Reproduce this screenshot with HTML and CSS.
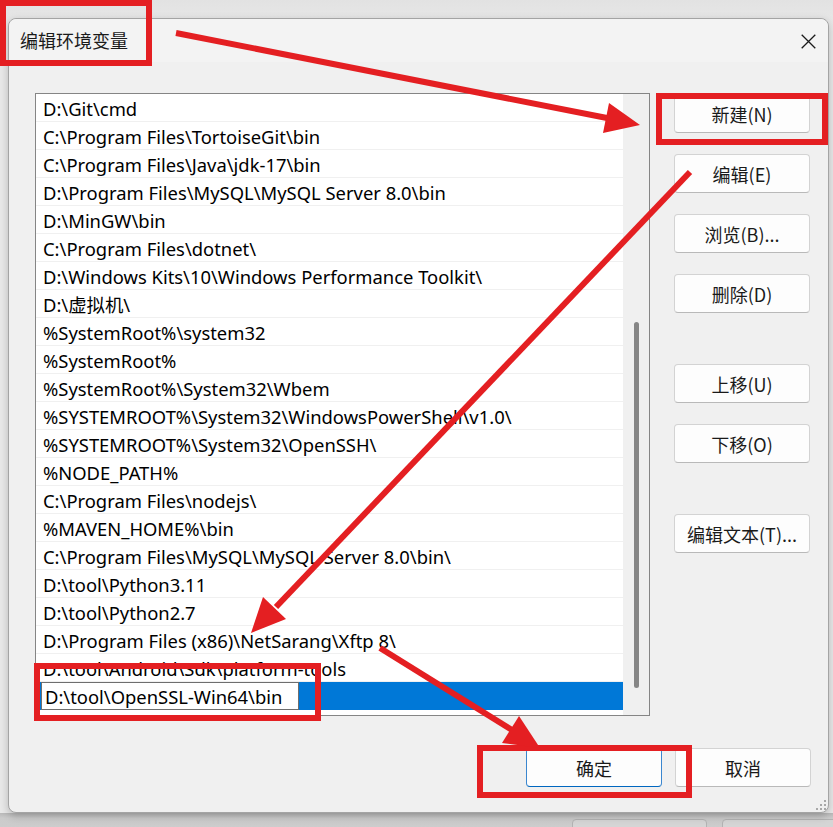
FILE: index.html
```html
<!DOCTYPE html>
<html lang="zh-CN">
<head>
<meta charset="utf-8">
<title>编辑环境变量</title>
<link rel="stylesheet" href="styles.css">
</head>
<body>
<div class="window">
  <div class="titlebar">
    <span class="title">编辑环境变量</span>
    <span class="close">
      <svg width="15" height="15" viewBox="0 0 15 15"><path d="M0.7 0.7 L14.3 14.3 M14.3 0.7 L0.7 14.3" stroke="#1a1a1a" stroke-width="1.3" fill="none"/></svg>
    </span>
  </div>
  <div class="main">
    <div class="listbox">
      <div class="rows">
        <div class="row">D:\Git\cmd</div>
        <div class="row">C:\Program Files\TortoiseGit\bin</div>
        <div class="row">C:\Program Files\Java\jdk-17\bin</div>
        <div class="row">D:\Program Files\MySQL\MySQL Server 8.0\bin</div>
        <div class="row">D:\MinGW\bin</div>
        <div class="row">C:\Program Files\dotnet\</div>
        <div class="row">D:\Windows Kits\10\Windows Performance Toolkit\</div>
        <div class="row">D:\虚拟机\</div>
        <div class="row">%SystemRoot%\system32</div>
        <div class="row">%SystemRoot%</div>
        <div class="row">%SystemRoot%\System32\Wbem</div>
        <div class="row">%SYSTEMROOT%\System32\WindowsPowerShell\v1.0\</div>
        <div class="row">%SYSTEMROOT%\System32\OpenSSH\</div>
        <div class="row">%NODE_PATH%</div>
        <div class="row">C:\Program Files\nodejs\</div>
        <div class="row">%MAVEN_HOME%\bin</div>
        <div class="row">C:\Program Files\MySQL\MySQL Server 8.0\bin\</div>
        <div class="row">D:\tool\Python3.11</div>
        <div class="row">D:\tool\Python2.7</div>
        <div class="row">D:\Program Files (x86)\NetSarang\Xftp 8\</div>
        <div class="row">D:\tool\Android\Sdk\platform-tools</div>
        <div class="row selected"><span class="editbox">D:\tool\OpenSSL-Win64\bin</span></div>
      </div>
      <div class="track"><div class="thumb"></div></div>
    </div>
    <div class="side">
      <button class="btn">新建(N)</button>
      <button class="btn">编辑(E)</button>
      <button class="btn">浏览(B)...</button>
      <button class="btn">删除(D)</button>
      <button class="btn group">上移(U)</button>
      <button class="btn">下移(O)</button>
      <button class="btn group">编辑文本(T)...</button>
    </div>
  </div>
  <div class="footer">
    <button class="btn default">确定</button>
    <button class="btn">取消</button>
  </div>
  <svg class="grip" width="10" height="10" viewBox="0 0 10 10">
    <rect x="8" y="0" width="2" height="2" fill="#a8a8a8"/>
    <rect x="4" y="4" width="2" height="2" fill="#a8a8a8"/>
    <rect x="8" y="4" width="2" height="2" fill="#a8a8a8"/>
    <rect x="0" y="8" width="2" height="2" fill="#a8a8a8"/>
    <rect x="4" y="8" width="2" height="2" fill="#a8a8a8"/>
    <rect x="8" y="8" width="2" height="2" fill="#a8a8a8"/>
  </svg>
</div>
<div class="parent-strip">
  <span class="pbtn"></span>
  <span class="pbtn"></span>
</div>
<svg class="annot" width="833" height="827" viewBox="0 0 833 827">
  <g fill="none" stroke="#e41f22" stroke-width="6">
    <rect x="3" y="3" width="146" height="60"/>
    <rect x="659" y="96" width="166" height="46"/>
    <rect x="37" y="666" width="281" height="52"/>
    <rect x="480" y="748" width="209" height="47"/>
  </g>
  <g stroke="#e41f22" stroke-width="6" stroke-linecap="butt">
    <line x1="176" y1="33" x2="607" y2="118"/>
    <line x1="690" y1="172" x2="276" y2="607"/>
    <line x1="380" y1="648" x2="512" y2="730"/>
  </g>
  <g fill="#e41f22">
    <polygon points="640,125 603,133 609,103"/>
    <polygon points="251,633 286,619 263,597"/>
    <polygon points="540,748 502,743 519,716"/>
  </g>
</svg>
</body>
</html>
```
FILE: styles.css
```css
html, body {
  margin: 0;
  padding: 0;
}
body {
  width: 833px;
  height: 827px;
  overflow: hidden;
  background: linear-gradient(#e2e2e2, #e9e9e9 30px, #e9e9e9);
  font-family: "Noto Sans", "Noto Sans CJK SC", sans-serif;
  position: relative;
}
.window {
  margin: 18px 0 0 8px;
  width: 821px;
  height: 795px;
  box-sizing: border-box;
  border: 1px solid #a4a4a4;
  border-radius: 8px;
  background: #f0f0f0;
  position: relative;
  display: flex;
  flex-direction: column;
  box-shadow: 0 3px 8px rgba(0, 0, 0, 0.22);
}
.titlebar {
  height: 43px;
  flex: none;
  background: #f3f3f3;
  border-radius: 8px 8px 0 0;
  display: flex;
  align-items: center;
  justify-content: space-between;
  padding: 0 12px 0 11px;
}
.title {
  font-family: "Noto Sans CJK SC", sans-serif;
  font-size: 18px;
  color: #1a1a1a;
  margin-top: -2px;
}
.close {
  display: flex;
  width: 15px;
  height: 15px;
  margin-top: 1px;
}
.main {
  display: flex;
  padding: 31px 0 0 26px;
}
.listbox {
  width: 615px;
  height: 623px;
  box-sizing: border-box;
  border: 1px solid #858585;
  background: #ffffff;
  display: flex;
}
.rows {
  width: 587px;
  flex: none;
}
.row {
  height: 28px;
  box-sizing: border-box;
  border-bottom: 1px solid #f0f0f0;
  padding-left: 7px;
  font-size: 18.4px;
  line-height: 29px;
  color: #000;
  white-space: nowrap;
  overflow: hidden;
}
.row.selected {
  background: #0078d7;
  border-bottom: none;
  padding-left: 5px;
  overflow: visible;
}
.editbox {
  display: block;
  width: 258px;
  height: 28px;
  box-sizing: border-box;
  border: 1px solid #6e6e6e;
  background: #fff;
  padding-left: 3px;
  line-height: 27px;
}
.track {
  flex: 1;
  background: #f0f0f0;
  display: flex;
  justify-content: center;
}
.thumb {
  width: 5px;
  height: 366px;
  margin-top: 228px;
  border-radius: 3px;
  background: #868686;
}
.side {
  display: flex;
  flex-direction: column;
  gap: 21px;
  margin-left: 24px;
  padding-top: 1px;
}
.btn {
  width: 136px;
  height: 39px;
  box-sizing: border-box;
  border: 1px solid #d3d3d3;
  border-bottom-color: #b9b9b9;
  border-radius: 4px;
  background: #fdfdfd;
  font-family: "Noto Sans CJK SC", sans-serif;
  font-size: 18px;
  color: #1a1a1a;
  padding: 0;
  line-height: 36px;
}
.btn.group {
  margin-top: 30px;
}
.footer {
  display: flex;
  justify-content: flex-end;
  gap: 13px;
  margin-top: 32px;
  padding-right: 17px;
}
.btn.default {
  border-color: #3a86cf;
  border-bottom-color: #0067c0;
}
.grip {
  position: absolute;
  right: 2px;
  bottom: 2px;
}
.parent-strip {
  height: 14px;
  background: linear-gradient(#b9b9b9, #cbcbcb 5px, #cdcdcd);
  display: flex;
  gap: 15px;
  padding: 6px 0 0 572px;
  margin-top: 0;
  overflow: hidden;
}
.pbtn {
  flex: none;
  width: 135px;
  height: 20px;
  box-sizing: border-box;
  border: 1px solid #b3b3b3;
  border-radius: 4px;
  background: #d5d5d5;
}
.annot {
  position: absolute;
  left: 0;
  top: 0;
  pointer-events: none;
}
```
